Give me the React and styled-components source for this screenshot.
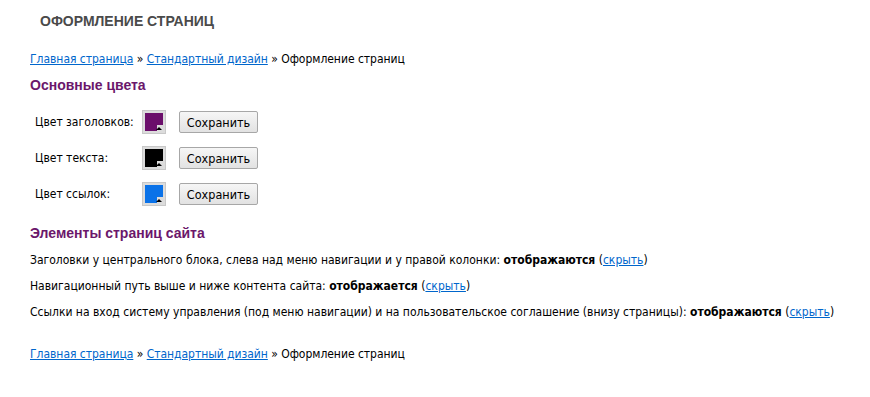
import styled, { createGlobalStyle } from 'styled-components';

const GlobalStyle = createGlobalStyle`
	body {
		margin: 0;
		background: #fff;
		font-family: "DejaVu Sans Condensed", "DejaVu Sans", Tahoma, sans-serif;
		font-size: 12px;
		color: #000;
	}
`;

const Page = styled.div`
	padding: 13px 30px 20px 30px;
`;

const Title = styled.h1`
	margin: 0 0 0 10px;
	font-family: "Liberation Sans", Arial, sans-serif;
	font-size: 14px;
	font-weight: bold;
	color: #4a4a4a;
	text-transform: uppercase;
	line-height: 17px;
`;

const Crumbs = styled.div`
	margin-top: ${({ $top }) => $top}px;
	line-height: 14px;
	letter-spacing: -0.03px;

	a {
		color: #0066cc;
		text-decoration: underline;
	}
`;

const Section = styled.h2`
	margin: ${({ $top }) => $top}px 0 0 0;
	font-family: "Liberation Sans", Arial, sans-serif;
	font-size: 14px;
	font-weight: bold;
	color: #6b176b;
	line-height: 16px;
`;

const Rows = styled.div`
	display: flex;
	flex-direction: column;
	gap: 12px;
	margin: 17px 0 0 5px;
`;

const Row = styled.div`
	display: flex;
	align-items: center;
	height: 24px;
`;

const Label = styled.span`
	width: 107px;
`;

const Swatch = styled.span`
	position: relative;
	box-sizing: border-box;
	width: 24px;
	height: 24px;
	background: #dcdcdc;
	border: 1px solid #c8c8c8;
	margin-right: 13px;

	&::before {
		content: '';
		position: absolute;
		left: 2px;
		top: 2px;
		width: 18px;
		height: 18px;
		background: ${({ $color }) => $color};
		clip-path: polygon(0 0, 100% 0, 100% 12px, 12px 12px, 12px 100%, 0 100%);
	}

	&::after {
		content: '';
		position: absolute;
		right: 3px;
		bottom: 3px;
		border-left: 3px solid transparent;
		border-right: 3px solid transparent;
		border-bottom: 3px solid #000;
	}
`;

const Button = styled.button`
	box-sizing: border-box;
	width: 79px;
	height: 22px;
	padding: 0;
	font-family: "DejaVu Sans Condensed", "DejaVu Sans", Tahoma, sans-serif;
	font-size: 12.5px;
	color: #000;
	background: linear-gradient(#f6f6f6, #e2e2e2);
	border: 1px solid #a7a7a7;
	border-radius: 2px;
`;

const Lines = styled.div`
	display: flex;
	flex-direction: column;
	gap: 12px;
	margin-top: 12px;
	line-height: 14px;

	a {
		color: #0066cc;
	}
`;

const colors = [
	{ label: 'Цвет заголовков:', color: '#6b0f6b' },
	{ label: 'Цвет текста:', color: '#000000' },
	{ label: 'Цвет ссылок:', color: '#0a72e8' },
];

const lines = [
	['Заголовки у центрального блока, слева над меню навигации и у правой колонки', 'отображаются'],
	['Навигационный путь выше и ниже контента сайта', 'отображается'],
	['Ссылки на вход систему управления (под меню навигации) и на пользовательское соглашение (внизу страницы)', 'отображаются'],
];

function Breadcrumbs({ top }) {
	return (
		<Crumbs $top={top}>
			<a href="#">Главная страница</a> » <a href="#">Стандартный дизайн</a> » Оформление страниц
		</Crumbs>
	);
}

export default function App() {
	return (
		<Page>
			<GlobalStyle />
			<Title>Оформление страниц</Title>
			<Breadcrumbs top={22} />
			<Section $top={11}>Основные цвета</Section>
			<Rows>
				{colors.map((c) => (
					<Row key={c.label}>
						<Label>{c.label}</Label>
						<Swatch $color={c.color} />
						<Button>Сохранить</Button>
					</Row>
				))}
			</Rows>
			<Section $top={19}>Элементы страниц сайта</Section>
			<Lines>
				{lines.map(([text, state]) => (
					<div key={text}>
						{text}: <b>{state}</b> (<a href="#">скрыть</a>)
					</div>
				))}
			</Lines>
			<Breadcrumbs top={28} />
		</Page>
	);
}
